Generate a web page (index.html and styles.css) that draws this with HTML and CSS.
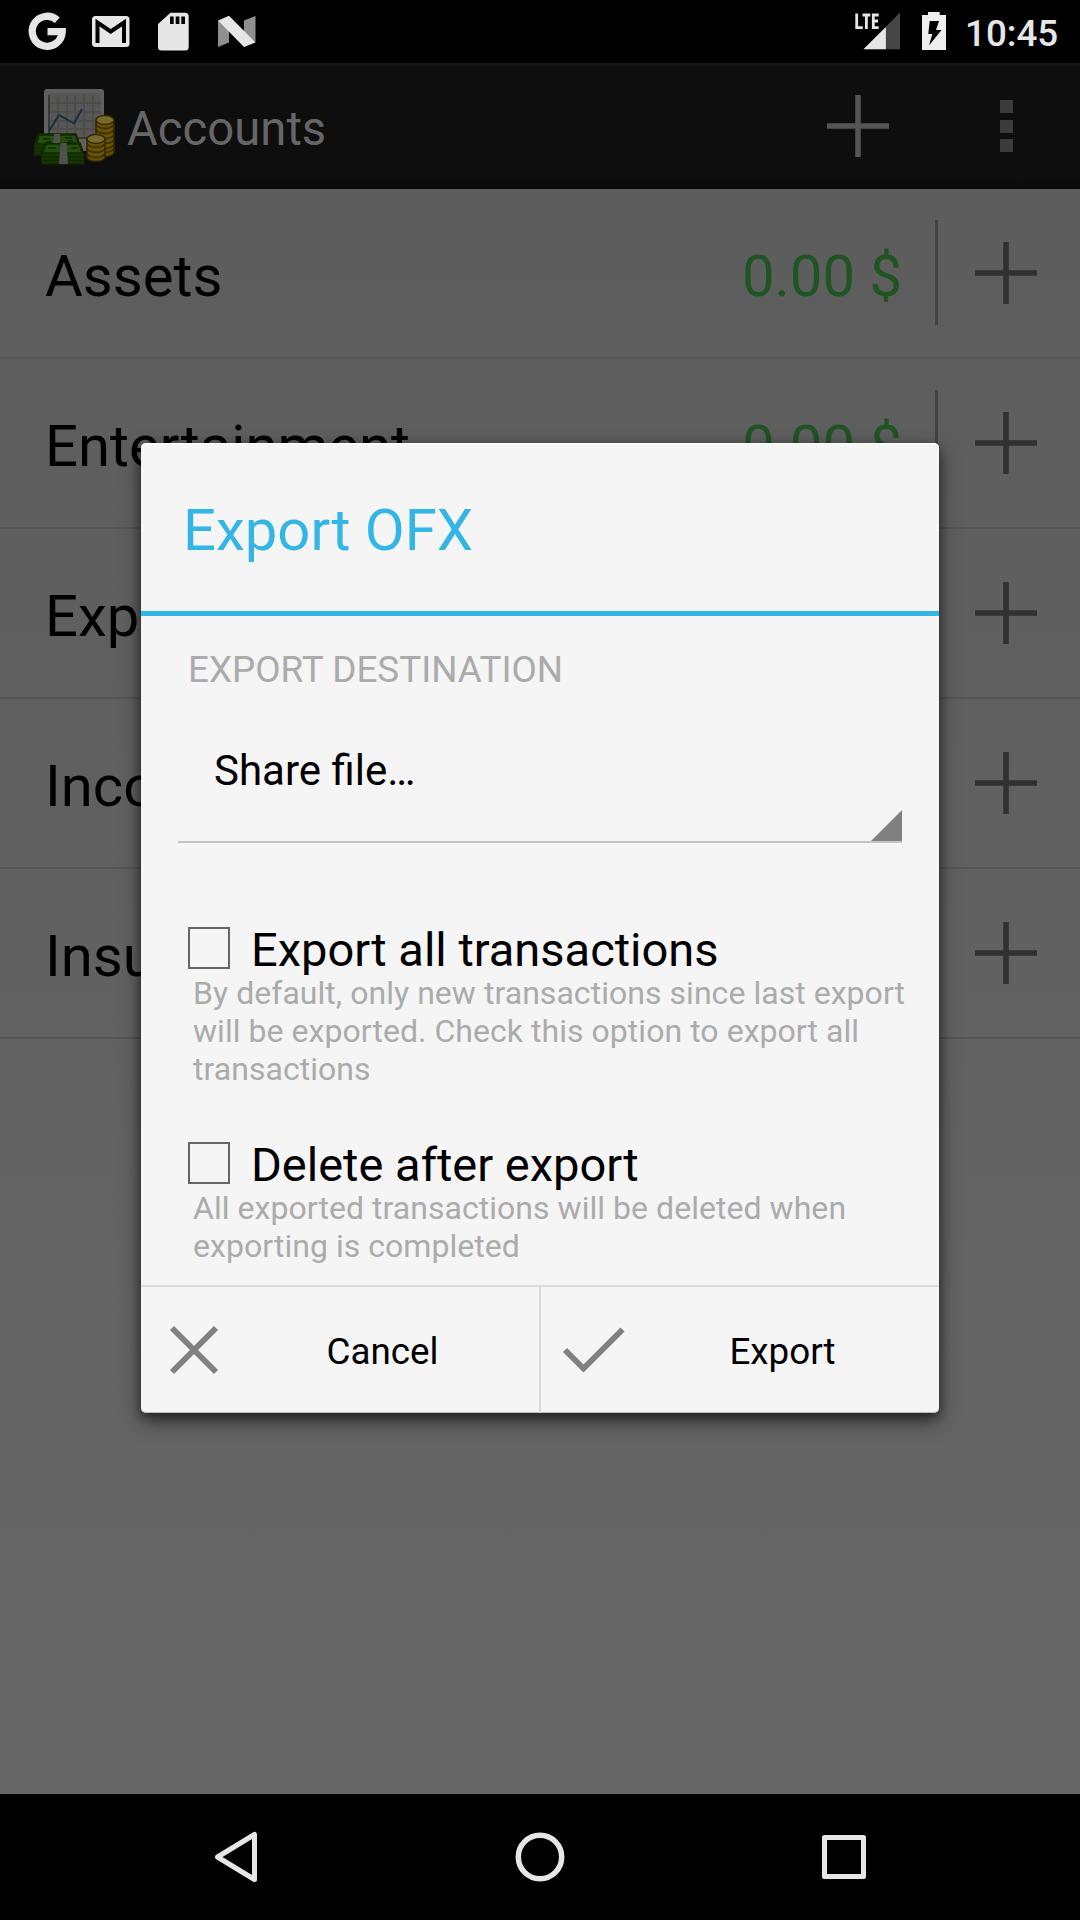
FILE: index.html
```html
<!DOCTYPE html>
<html lang="en">
<head>
<meta charset="utf-8">
<title>Accounts</title>
<link rel="stylesheet" href="styles.css">
</head>
<body>
<svg class="defs" width="0" height="0" aria-hidden="true">
  <symbol id="plus" viewBox="0 0 64 64"><path d="M32 1v62M1 32h62" stroke="currentColor" stroke-width="5.6" fill="none"/></symbol>
</svg>
<div class="screen">
  <header class="status">
    <svg class="status-left" width="270" height="63" viewBox="0 0 270 63">
      <path d="M57.3 20.2A15 15 0 1 0 62.200 31.600H47.5" fill="none" stroke="#e6e6e6" stroke-width="7.3"/>
      <rect x="92" y="16" width="37.500" height="31" rx="3.500" fill="#e6e6e6"/>
      <path d="M97.500 43V22.500L110.700 31.500L124 22.500V43" fill="none" stroke="#000" stroke-width="4"/>
      <path d="M170.500 12.800h14.700a3.500 3.500 0 0 1 3.500 3.500v30.700a3.500 3.500 0 0 1-3.500 3.500h-23.700a3.500 3.500 0 0 1-3.500-3.500V24z" fill="#e6e6e6"/>
      <path d="M170 16.500h3.700V24H170zM175.700 16.500h3.700V24h-3.700zM181.300 16.500h3.700V24h-3.700z" fill="#000"/>
      <path d="M218 20.500L229 29V42.500L218 47zM244 20.500L255.500 16V42.500L244 33z" fill="#8f8f8f"/>
      <path d="M218 20.500L229 15.800L255.500 42.500L244 47z" fill="#e6e6e6"/>
    </svg>
    <div class="status-right">
      <svg width="100" height="63" viewBox="0 0 100 63">
        <path d="M9.500 49.300L46 12.500V49.300z" fill="#464646"/>
        <path d="M9.500 49.300L31.900 26.900V49.300z" fill="#e6e6e6"/>
        <path d="M2.700 13.500V27.700H8.800M8.500 15H16.300M12.400 15V29M24.700 15H19.300V27.700H24.700M19.300 21H24" fill="none" stroke="#e6e6e6" stroke-width="2.800"/>
        <path d="M68 15h6v-3h11.700v3H92v35H68z" fill="#eee"/>
        <path d="M75.700 21h9.300L82 30h5.500L75 45.500L78.300 34h-4z" fill="#000"/>
      </svg>
      <span class="clock">10:45</span>
    </div>
  </header>

  <div class="actionbar">
    <svg class="logo" width="84" height="80" viewBox="0 0 84 80">
      <rect x="10" y="1" width="60" height="62" rx="3" fill="#606060"/>
      <rect x="14" y="5" width="53" height="45" fill="#575755"/>
      <path d="M24 7v43M33 7v43M41 7v43M50 7v43M59 7v43M15 15h52M15 24h52M15 33h52M15 41h52" stroke="#4b4b49" stroke-width="1.500"/>
      <path d="M15 7v43h52" fill="none" stroke="#383838" stroke-width="2"/>
      <path d="M15 43L25 27L40 35.500L48 21" fill="none" stroke="#1a2b48" stroke-width="2"/>
      <g stroke="#122800" stroke-width="1.300">
        <path d="M4 46H42L46 57V67H0.500V57z" fill="#173700"/>
        <path d="M5 47H41L45 56H3z" fill="#235010"/>
        <path d="M1 60H45M1 63.500H45"/>
        <path d="M11 55H46L50 66V76H7.500V66z" fill="#173700"/>
        <path d="M12 56H45L48 65H9z" fill="#235010"/>
        <path d="M8 69H50M8 72.500H50"/>
      </g>
      <path d="M20 46h6v9h-7z" fill="#505050"/>
      <path d="M26.500 55h6l1.500 21h-9z" fill="#505050"/>
      <path d="M9 51h7M31 50h7M14 60h8M37 60h7M12 54h5M34 53h5" stroke="#123000" stroke-width="2"/>
      <g stroke="#352800" stroke-width="1.500">
        <path d="M62 32v32a9 4.500 0 0 0 18 0V32z" fill="#675300"/>
        <path d="M62 36a9 4.500 0 0 0 18 0M62 41a9 4.500 0 0 0 18 0M62 46a9 4.500 0 0 0 18 0M62 51a9 4.500 0 0 0 18 0M62 56a9 4.500 0 0 0 18 0M62 60a9 4.500 0 0 0 18 0" fill="none"/>
        <ellipse cx="71" cy="32" rx="9" ry="4.500" fill="#77692b"/>
        <path d="M53 51v18a9 4.500 0 0 0 18 0V51z" fill="#675300"/>
        <path d="M53 55a9 4.500 0 0 0 18 0M53 60a9 4.500 0 0 0 18 0M53 65a9 4.500 0 0 0 18 0" fill="none"/>
        <ellipse cx="62" cy="51" rx="9" ry="4.500" fill="#77692b"/>
      </g>
    </svg>
    <h1 class="bar-title">Accounts</h1>
    <svg class="bar-add" width="64" height="64"><use href="#plus"/></svg>
    <div class="overflow"><i></i><i></i><i></i></div>
  </div>

  <main class="accounts">
    <div class="row"><span class="name">Assets</span><span class="amount">0.00 $</span><i class="rule"></i><svg class="add" width="64" height="64"><use href="#plus"/></svg></div>
    <div class="row"><span class="name">Entertainment</span><span class="amount">0.00 $</span><i class="rule"></i><svg class="add" width="64" height="64"><use href="#plus"/></svg></div>
    <div class="row"><span class="name">Expenses</span><span class="amount">0.00 $</span><i class="rule"></i><svg class="add" width="64" height="64"><use href="#plus"/></svg></div>
    <div class="row"><span class="name">Income</span><span class="amount">0.00 $</span><i class="rule"></i><svg class="add" width="64" height="64"><use href="#plus"/></svg></div>
    <div class="row"><span class="name">Insurance</span><span class="amount">0.00 $</span><i class="rule"></i><svg class="add" width="64" height="64"><use href="#plus"/></svg></div>
  </main>

  <nav class="navbar">
    <svg width="1080" height="126" viewBox="0 0 1080 126" fill="none" stroke="#e6e6e6" stroke-width="5" stroke-linejoin="round">
      <path d="M217.500 63L254.500 40.500V85.500z"/>
      <circle cx="540" cy="63" r="21.700" stroke-width="5.500"/>
      <rect x="824.500" y="43.500" width="39" height="39"/>
    </svg>
  </nav>

  <section class="dialog">
    <h2 class="dialog-title">Export OFX</h2>
    <div class="dialog-body">
      <div class="section-label">EXPORT DESTINATION</div>
      <div class="spinner">
        <span>Share file…</span>
        <svg width="31" height="31" viewBox="0 0 31 31"><path d="M0 31L31 0V31z" fill="#808080"/></svg>
      </div>
      <div class="option">
        <div class="check-line"><i class="box"></i><span>Export all transactions</span></div>
        <p>By default, only new transactions since last export<br>will be exported. Check this option to export all<br>transactions</p>
      </div>
      <div class="option">
        <div class="check-line"><i class="box"></i><span>Delete after export</span></div>
        <p>All exported transactions will be deleted when<br>exporting is completed</p>
      </div>
    </div>
    <div class="buttons">
      <div class="button">
        <svg width="64" height="64" viewBox="0 0 64 64"><path d="M10 10L54 54M54 10L10 54" stroke="#808080" stroke-width="5.800"/></svg>
        <span>Cancel</span>
      </div>
      <div class="button">
        <svg width="64" height="64" viewBox="0 0 64 64"><path d="M3 32L21.500 50.500L60.500 11.500" fill="none" stroke="#808080" stroke-width="5.800"/></svg>
        <span>Export</span>
      </div>
    </div>
  </section>
</div>
</body>
</html>
```
FILE: styles.css
```css
* { box-sizing: border-box; margin: 0; padding: 0; }
body { width: 1080px; height: 1920px; overflow: hidden; background: #000; font-family: Roboto, "Liberation Sans", sans-serif; font-weight: 400; }
svg { display: block; flex: none; }
.defs { position: absolute; }
.screen { position: relative; display: flex; flex-direction: column; width: 1080px; height: 1920px; }

.status { display: flex; justify-content: space-between; height: 63px; background: #000; color: #e6e6e6; }
.status-right { display: flex; width: 226px; }
.clock { margin-left: 11px; padding-top: 4px; font-size: 36.75px; font-weight: 500; line-height: 59px; white-space: nowrap; }

.actionbar { display: flex; align-items: center; height: 126px; padding-left: 34px; background: linear-gradient(#0e0e0e 110px, #090909); border-top: 3px solid #171717; }
.logo { margin-top: 1px; }
.bar-title { margin-left: 9px; padding-top: 2px; font-size: 47.25px; font-weight: 400; line-height: 60px; color: #666; }
.bar-add { margin: -3px 0 0 auto; color: #555; }
.overflow { display: flex; flex-direction: column; gap: 6.5px; margin: -3px 67px 0 110px; }
.overflow i { width: 13px; height: 13px; background: #3b3b3b; }

.accounts { flex: 1; background: linear-gradient(#5d5d5d, #666); }
.row { display: flex; align-items: center; height: 170px; padding-left: 45px; border-bottom: 2px solid #555; font-size: 58px; line-height: 80px; }
.name { padding-top: 6px; color: #000; }
.amount { margin-left: auto; padding-top: 6px; color: #1f5423; white-space: nowrap; }
.rule { width: 3px; height: 105px; margin: -1px 0 0 33px; background: #424242; }
.add { margin: 0 42px 0 36px; color: #313131; }

.navbar { height: 126px; background: #000; }

.dialog {
  position: absolute; left: 141px; top: 443px; width: 798px; height: 970px;
  display: flex; flex-direction: column; background: #f5f5f5; border-radius: 5px; color: #000;
  box-shadow: inset 0 1px #fff, inset 0 -1px #bdbdbd, 0 8px 20px rgba(0,0,0,.55), 0 3px 8px rgba(0,0,0,.35);
}
.dialog-title { height: 173px; padding: 7px 0 0 42px; border-bottom: 5px solid #33b5e5; font-size: 58px; font-weight: 400; line-height: 161px; color: #33b5e5; }
.dialog-body { flex: 1; min-height: 0; padding: 29px 37px 0; }
.section-label { padding-left: 10px; font-size: 36.85px; line-height: 50px; color: #ababab; }
.spinner { display: flex; justify-content: space-between; align-items: flex-end; height: 148px; border-bottom: 2px solid #c4c4c4; }
.spinner span { padding: 0 0 40px 36px; font-size: 42px; letter-spacing: -0.02px; line-height: 60px; }
.spinner span { font-variant-ligatures: common-ligatures; letter-spacing: normal; }
.option { height: 215px; padding-left: 10px; }
.spinner + .option { margin-top: 78px; }
.option:last-child { height: 132px; }
.check-line { display: flex; align-items: center; height: 54px; gap: 21px; font-size: 47px; line-height: 50px; }
.box { width: 42px; height: 42px; margin-top: -1px; border: 2px solid #666; }
.check-line span { padding-top: 4px; }
.option p { margin-top: -1px; padding-left: 5px; font-size: 32px; letter-spacing: 0.04px; line-height: 38px; color: #ababab; white-space: nowrap; }
.buttons { display: flex; flex: none; height: 128px; border-top: 2px solid #dadada; }
.button { flex: 1; display: flex; align-items: center; padding-left: 21px; font-size: 36.75px; line-height: 50px; }
.button + .button { border-left: 2px solid #dadada; }
.button span { flex: 1; padding-top: 4px; text-align: center; }
```
